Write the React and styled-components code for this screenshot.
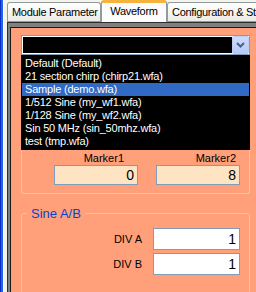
import React from 'react';
import styled, { createGlobalStyle } from 'styled-components';

const GlobalStyle = createGlobalStyle`
  html, body {
    margin: 0;
    padding: 0;
  }
  body {
    width: 256px;
    height: 292px;
    overflow: hidden;
    background: #f4f3ee;
    font-family: "Liberation Sans", Arial, sans-serif;
    font-size: 11px;
    color: #000;
  }
`;

const App = () => {
  return (
    <>
      <GlobalStyle />
      <Page>
        <LeftEdge />
        <Main>
          <TabStrip>
            {TABS.map((tab) => (
              <Tab key={tab.id} $width={tab.width} $active={tab.id === 2}>
                {tab.name}
              </Tab>
            ))}
          </TabStrip>
          <Frame>
            <Panel>
              <GroupBox $open>
                <Combo>
                  <ComboField />
                  <ComboButton>
                    <svg width="9" height="6" viewBox="0 0 9 6">
                      <polyline
                        points="1,1 4.5,4.5 8,1"
                        fill="none"
                        stroke="#4d6185"
                        strokeWidth="2"
                      />
                    </svg>
                  </ComboButton>
                </Combo>
                <DropList>
                  {WAVEFORMS.map((name, idx) => (
                    <DropItem key={idx} $selected={idx === SELECTED}>
                      {name}
                    </DropItem>
                  ))}
                </DropList>
                <MarkerGrid>
                  <MarkerLabel $inset={14}>Marker1</MarkerLabel>
                  <MarkerLabel $inset={4}>Marker2</MarkerLabel>
                  <ValueBox $bg="#ffe4c4" $height={20}>0</ValueBox>
                  <ValueBox $bg="#ffe4c4" $height={20}>8</ValueBox>
                </MarkerGrid>
              </GroupBox>
              <FieldGroup>
                <Legend>Sine A/B</Legend>
                <DivRows>
                  <DivRow>
                    <DivLabel>DIV A</DivLabel>
                    <ValueBox $bg="#ffffff" $height={22} $width={87}>1</ValueBox>
                  </DivRow>
                  <DivRow>
                    <DivLabel>DIV B</DivLabel>
                    <ValueBox $bg="#ffffff" $height={22} $width={87}>1</ValueBox>
                  </DivRow>
                </DivRows>
              </FieldGroup>
            </Panel>
          </Frame>
        </Main>
      </Page>
    </>
  );
};

export default App;

const Page = styled.div`
  display: flex;
  width: 256px;
  height: 292px;
  overflow: hidden;
`;

const LeftEdge = styled.div`
  flex: none;
  width: 4px;
  background: linear-gradient(
    to right,
    #0a2fc2 0 1px,
    #2062ee 1px 3px,
    #ffffff 3px 4px
  );
`;

const Main = styled.div`
  flex: 1;
  min-width: 0;
  display: flex;
  flex-direction: column;
  padding-left: 3px;
`;

const TabStrip = styled.div`
  flex: none;
  display: flex;
  align-items: flex-end;
  height: 21px;
  border-bottom: 1px solid #919b9c;
`;

const Tab = styled.div`
  flex: none;
  box-sizing: border-box;
  width: ${({ $width }) => $width}px;
  height: ${({ $active }) => ($active ? 22 : 19)}px;
  margin-bottom: ${({ $active }) => ($active ? -1 : 0)}px;
  display: flex;
  align-items: center;
  justify-content: ${({ $active }) => ($active ? 'center' : 'flex-start')};
  padding: ${({ $active }) => ($active ? '0 0 4px 0' : '0 0 0 4px')};
  border: 1px solid #919b9c;
  border-bottom: none;
  border-top: ${({ $active }) =>
    $active ? '3px solid #f5b33e' : '1px solid #919b9c'};
  border-radius: 3px 3px 0 0;
  background: ${({ $active }) =>
    $active ? '#fcfcfe' : 'linear-gradient(#ffffff, #ecebe5)'};
  white-space: nowrap;
  letter-spacing: -0.3px;
`;

const Frame = styled.div`
  flex: 1;
  display: flex;
  border-top: 1px solid #2e2e2e;
  border-left: 1px solid #2e2e2e;
`;

const Panel = styled.div`
  flex: 1;
  box-sizing: border-box;
  padding: 8px 6px 0 11px;
  border-style: solid;
  border-color: #808080;
  border-width: 4px 0 0 2px;
  background: #ffa07a;
  box-shadow: inset 1px 1px 0 #1a1a1a;
`;

const GroupBox = styled.div`
  border: 1px solid #d6cebd;
  border-top: ${({ $open }) => ($open ? 'none' : '1px solid #d6cebd')};
  border-radius: 0 0 3px 3px;
  padding-bottom: 8px;
`;

const Combo = styled.div`
  display: flex;
  height: 20px;
  box-sizing: border-box;
  margin: 0 -1px;
  border: 1px solid #7f9db9;
  background: #ffffff;
`;

const ComboField = styled.div`
  flex: 1;
  margin: 1px 0 1px 1px;
  background: #000000;
`;

const ComboButton = styled.div`
  flex: none;
  width: 17px;
  display: flex;
  align-items: center;
  justify-content: center;
  box-sizing: border-box;
  border: 1px solid #bccdf4;
  border-radius: 2px;
  background: linear-gradient(#cddbfd, #b6c9f7);
`;

const DropList = styled.div`
  margin: 0 -1px;
  padding: 1px 0;
  border: 1px solid #000000;
  background: #000000;
`;

const DropItem = styled.div`
  height: 13px;
  line-height: 13px;
  padding-left: 3px;
  color: #ffffff;
  white-space: nowrap;
  letter-spacing: -0.2px;
  background: ${({ $selected }) => ($selected ? '#316ac5' : 'transparent')};
`;

const MarkerGrid = styled.div`
  display: grid;
  grid-template-columns: 84px 84px;
  column-gap: 18px;
  padding-left: 32px;
  margin-top: 2px;
`;

const MarkerLabel = styled.div`
  height: 13px;
  line-height: 13px;
  text-align: right;
  padding-right: ${({ $inset }) => $inset}px;
`;

const ValueBox = styled.div`
  box-sizing: border-box;
  height: ${({ $height }) => $height}px;
  width: ${({ $width }) => ($width ? `${$width}px` : 'auto')};
  border: 1px solid #7f9db9;
  background: ${({ $bg }) => $bg};
  padding-right: 3px;
  text-align: right;
  font-size: 14px;
  line-height: ${({ $height }) => $height - 2}px;
`;

const FieldGroup = styled.fieldset`
  margin: 12px 0 0 0;
  padding: 0 0 40px 0;
  border: 1px solid #d6cebd;
  border-radius: 3px;
  min-width: 0;
`;

const Legend = styled.legend`
  margin-left: 5px;
  padding: 0 4px;
  line-height: 15px;
  font-size: 13px;
  color: #0046d5;
`;

const DivRows = styled.div`
  display: flex;
  flex-direction: column;
  gap: 3px;
  margin-top: 7px;
  padding-right: 9px;
`;

const DivRow = styled.div`
  display: flex;
  justify-content: flex-end;
  align-items: center;
  gap: 11px;
`;

const DivLabel = styled.div`
  font-size: 11px;
`;

const WAVEFORMS = [
  'Default (Default)',
  '21 section chirp (chirp21.wfa)',
  'Sample (demo.wfa)',
  '1/512 Sine (my_wf1.wfa)',
  '1/128 Sine (my_wf2.wfa)',
  'Sin 50 MHz (sin_50mhz.wfa)',
  'test (tmp.wfa)',
];

const SELECTED = 2;

const TABS = [
  { id: 1, name: 'Module Parameter', width: 94 },
  { id: 2, name: 'Waveform', width: 66 },
  { id: 3, name: 'Configuration & Status', width: 130 },
];
